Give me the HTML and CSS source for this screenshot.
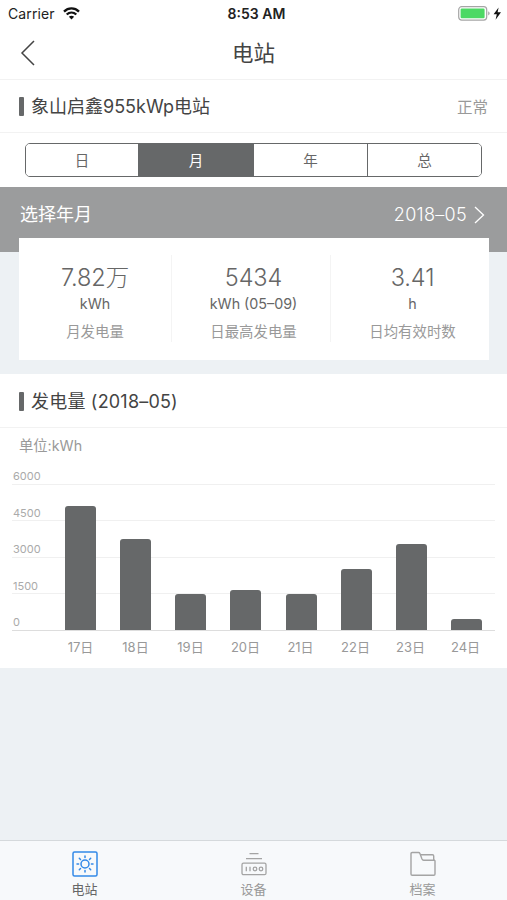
FILE: index.html
```
<!doctype html>
<html lang="zh-CN">
<head>
<meta charset="utf-8" />
<meta name="viewport" content="width=device-width,initial-scale=1" />
<title>电站</title>
<link rel="stylesheet" href="styles.css">
</head>
<body>

<div class="status-bar">
  <div class="carrier"><span>Carrier</span>
    <svg width="17" height="13" viewBox="0 0 17 13" fill="none" stroke="#111" stroke-width="2.3">
      <path d="M1 4.6C5.3.4 11.7.4 16 4.6M3.7 7.5c2.8-2.6 6.8-2.6 9.6 0"/>
      <path d="M5.9 9.7c1.5-1.3 3.7-1.3 5.2 0L8.5 12.4z" fill="#111" stroke="none"/>
    </svg>
  </div>
  <div class="time">8:53 AM</div>
  <div class="battery">
    <svg width="44" height="15" viewBox="0 0 44 15">
      <rect x=".7" y=".7" width="28" height="13.4" rx="3" fill="#fff" stroke="#a5a5a5" stroke-width="1.2"/>
      <rect x="2.6" y="2.6" width="24" height="9.6" rx="1.2" fill="#4cd964"/>
      <path d="M30.2 5.2q3 2.2 0 4.4z" fill="#a5a5a5"/>
      <path d="M40.6 1.4L35.6 8.2h3.2l-1.2 5.6 5.4-7.5h-3.4z" fill="#111"/>
    </svg>
  </div>
</div>

<header class="navbar">
  <svg class="back" width="16" height="26" viewBox="0 0 16 26" fill="none" stroke="#444" stroke-width="1.5"><path d="M14 1L2 13l12 12"/></svg>
  <h1>电站</h1>
</header>

<section class="station">
  <div class="section-head">
    <h2>象山启鑫955kWp电站</h2>
    <span class="state">正常</span>
  </div>
  <div class="segments">
    <button>日</button><button class="active">月</button><button>年</button><button>总</button>
  </div>
</section>

<div class="picker">
  <span>选择年月</span>
  <span class="picked">2018–05
    <svg width="11" height="18" viewBox="0 0 11 18" fill="none" stroke="#fff" stroke-width="1.3"><path d="M1 1l8.5 8L1 17"/></svg>
  </span>
</div>

<div class="summary">
  <div class="stat"><strong>7.82万</strong><span class="unit">kWh</span><span class="label">月发电量</span></div>
  <div class="stat"><strong>5434</strong><span class="unit">kWh (05–09)</span><span class="label">日最高发电量</span></div>
  <div class="stat"><strong>3.41</strong><span class="unit">h</span><span class="label">日均有效时数</span></div>
</div>

<section class="output">
  <div class="section-head">
    <h2>发电量 (2018–05)</h2>
  </div>
  <p class="chart-unit">单位:kWh</p>
  <div class="chart">
    <div class="grid">
      <div>6000</div><div>4500</div><div>3000</div><div>1500</div><div>0</div>
    </div>
    <div class="bars" id="bars"></div>
  </div>
  <div class="days" id="days"></div>
</section>

<nav class="tabbar">
  <a class="tab current">
    <svg width="26" height="26" viewBox="0 0 26 26" fill="none" stroke="#3389e8" stroke-width="1.5">
      <rect x="1" y="1" width="24" height="24" rx="1.5"/>
      <circle cx="13" cy="13" r="4"/>
      <path stroke-linecap="round" d="M13 5v1.6M13 19.4V21M5 13h1.6M19.4 13H21M7.3 7.3l1.2 1.2M17.5 17.5l1.2 1.2M18.7 7.3l-1.2 1.2M8.5 17.5l-1.2 1.2"/>
    </svg>
    <span>电站</span>
  </a>
  <a class="tab">
    <svg width="26" height="26" viewBox="0 0 26 26" fill="none" stroke="#a4a4a4" stroke-width="1.3">
      <path d="M8.5 2.6h9M5 7.6h16"/>
      <rect x="1" y="12.2" width="24" height="11.5" rx="1.5"/>
      <path d="M5.3 15.7v4.5M9 15.7v4.5"/>
      <circle cx="14" cy="18" r="1.8"/><circle cx="20" cy="18" r="1.8"/>
    </svg>
    <span>设备</span>
  </a>
  <a class="tab">
    <svg width="26" height="26" viewBox="0 0 26 26" fill="none" stroke="#a4a4a4" stroke-width="1.4" stroke-linejoin="round">
      <path d="M25 9.2V23a1.2 1.2 0 0 1-1.2 1.2H2.2A1.2 1.2 0 0 1 1 23V2.7a1.2 1.2 0 0 1 1.2-1.2h6.3q1 0 1.4 1L12 8q.5 1.2 1.6 1.2H25"/>
      <path d="M11 3.8h11.5q1.2 0 1.2 1.2v4.2"/>
    </svg>
    <span>档案</span>
  </a>
</nav>

<script>
  // daily output in kWh
  const data=[[17,5110],[18,3750],[19,1480],[20,1640],[21,1480],[22,2500],[23,3540],[24,440]];
  const max=6000;
  document.getElementById('bars').innerHTML=data.map(d=>`<i style="height:${d[1]/max*100}%"></i>`).join('');
  document.getElementById('days').innerHTML=data.map(d=>`<span>${d[0]}日</span>`).join('');
</script>

</body>
</html>
```

FILE: styles.css
```
*{box-sizing:border-box}
body{margin:0;height:900px;display:flex;flex-direction:column;overflow:hidden;background:#edf1f4;color:#444;font-family:Inter,"Noto Sans CJK SC",sans-serif;font-weight:400}
h1,h2,p{margin:0;font-weight:400}
svg{display:block}

.status-bar{height:27px;padding:0 5px 0 8px;display:grid;grid-template-columns:1fr auto 1fr;align-items:center;background:#fff;color:#222;font-size:14px}
.carrier{display:flex;align-items:center;gap:8px;letter-spacing:.1px}
.time{padding-left:3px;font-weight:600;font-size:14px}
.battery{justify-self:end}

.navbar{height:53px;display:grid;grid-template-columns:60px 1fr 60px;align-items:center;background:#fff;border-bottom:1px solid #f2f2f2}
.navbar .back{margin-left:20px;margin-top:-1px}
.navbar h1{font-size:21.5px;line-height:30px;text-align:center}

.station{height:107px;background:#fff}
.section-head{height:53px;padding:0 19px;display:flex;align-items:center;justify-content:space-between;border-bottom:1px solid #f2f2f2}
.section-head h2{display:flex;align-items:center;padding-top:2px;font-size:18px;line-height:26px}
.section-head h2::before{content:"";width:5px;height:19px;margin:-2px 7px 0 0;border-radius:1px;background:#666869}
.state{font-size:15.5px;color:#999}
.segments{height:34px;margin:10px 25px 0;display:grid;grid-template-columns:113px 115px 114px 1fr;border:1px solid #666869;border-radius:5px;overflow:hidden}
.segments button{padding:0 0 1px;border:0;border-right:1px solid #666869;background:#fff;color:#666;font:inherit;font-size:14.5px}
.segments button:last-child{border-right:0}
.segments .active{background:#666869;color:#fff}

.picker{flex:none;height:65px;padding:15px 22px 0 20px;display:flex;justify-content:space-between;background:#9b9c9d;color:#fff;font-size:18px;line-height:26px}
.picked{display:flex;align-items:center;gap:7px;height:25px;font-size:18px;font-weight:300;letter-spacing:.3px}

.summary{flex:none;height:122px;margin:-14px 18px 0 19px;padding-top:17px;display:grid;grid-template-columns:153px 159px 1fr;background:#fff}
.stat{height:87px;display:flex;flex-direction:column;align-items:center;border-right:1px solid #f4f4f4;color:#666}
.stat+.stat{padding-left:5px}
.stat:last-child{border-right:0}
.stat strong{font-weight:300;font-size:23.5px;line-height:45px;height:39px;letter-spacing:-.1px}
.stat .unit{font-size:14.3px;line-height:20px;margin-bottom:7px}
.stat .label{font-size:14.4px;line-height:22px;color:#999}

.output{height:294px;margin-top:14px;background:#fff}
.output .section-head{height:54px}
.output h2{padding-top:3px;letter-spacing:.2px}
.chart-unit{padding-left:19px;font-size:14.3px;line-height:35px;height:34px;color:#999}
.chart{display:grid;height:168px;padding:0 12px}
.grid,.bars{grid-area:1/1}
.grid{display:flex;flex-direction:column}
.grid div{height:36.4px;padding:21px 0 0 1px;flex:none;border-bottom:1px solid #f0f0f0;color:#aaa;font-size:11px;line-height:15px}
.grid div:first-child{height:23px;padding-top:7px}
.grid div:last-child{border-color:#ddd}
.bars{align-self:end;height:145px;margin-bottom:1px;padding:0 13px 0 53px;display:flex;align-items:flex-end;justify-content:space-between}
.bars i{width:31px;border-radius:3px 3px 0 0;background:#666869}
.days{display:grid;grid-template-columns:repeat(8,55px);padding-left:53px;margin-top:7px;text-align:center;font-size:13px;line-height:20px;color:#999}

.tabbar{height:60px;margin-top:auto;display:grid;grid-template-columns:repeat(3,1fr);background:#f7f9fb;border-top:1px solid #d5d9dc}
.tab{padding-top:10px;display:flex;flex-direction:column;align-items:center;font-size:13px;line-height:20px;color:#999}
.tab span{margin-top:2px}
.tab.current{color:#666}
```
